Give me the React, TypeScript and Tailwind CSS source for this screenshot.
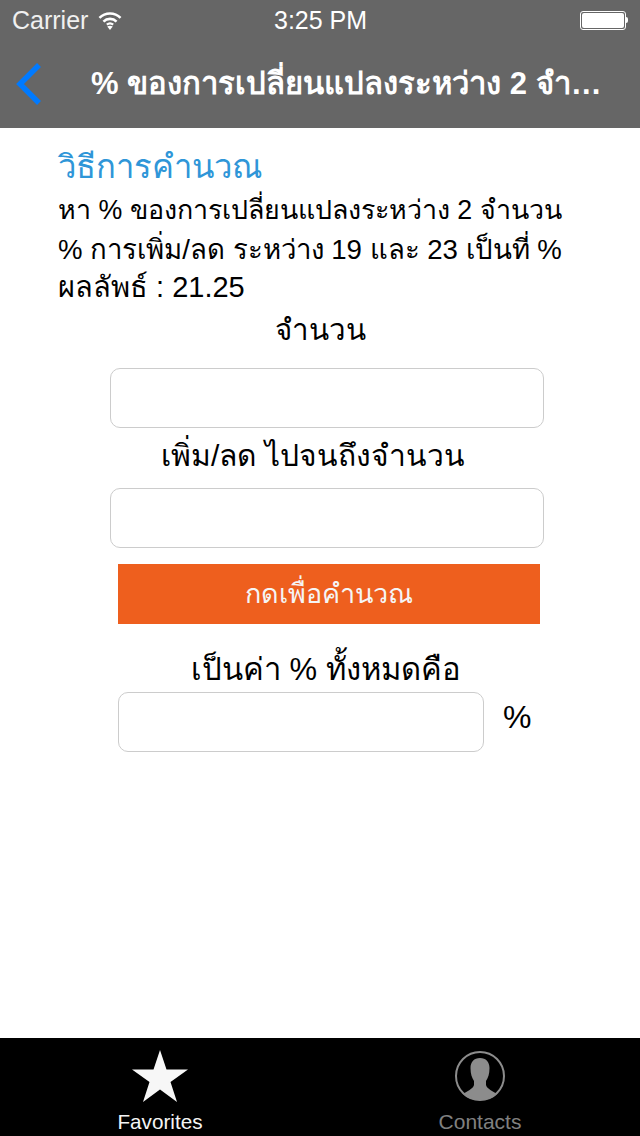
const sans = 'font-["Helvetica_Neue","Liberation_Sans","Noto_Sans",sans-serif]';

function Field({ className }: { className: string }) {
  return <div className={`h-[60px] rounded-[10px] border border-[#cccccc] bg-white ${className}`} />;
}

export default function App() {
  return (
    <div className={`flex h-[1136px] w-[640px] flex-col bg-white ${sans}`}>
      {/* status + nav bar */}
      <header className="h-[128px] shrink-0 bg-[#666666] text-white">
        <div className="relative flex h-[40px] items-center pl-3 pr-[12px]">
          <span className="text-[25px] leading-none text-[#f0f0f0]">Carrier</span>
          <svg className="ml-[10px]" width="24" height="19" viewBox="0 0 22 18" fill="none" stroke="white">
            <path d="M1 6.500C6.500 1 15.500 1 21 6.500" strokeWidth="2.4" />
            <path d="M4.800 10C8.200 6.600 13.800 6.600 17.200 10" strokeWidth="2.4" />
            <path d="M8 13C9.800 11.500 12.200 11.500 14 13" strokeWidth="2.200" />
            <path d="M11 18L8.400 14.800C10 13.800 12 13.800 13.600 14.800Z" fill="white" stroke="none" />
          </svg>
          <span className="absolute left-[274px] text-[25px] font-medium leading-none">3:25 PM</span>
          <div className="ml-auto flex items-center">
            <div className="h-[19px] w-[46px] rounded-[3px] border border-white p-[1px]">
              <div className="h-full w-full rounded-[2px] bg-white" />
            </div>
            <div className="h-[6px] w-[2px] rounded-r-sm bg-white" />
          </div>
        </div>
        <div className="flex h-[88px] items-center">
          <svg className="ml-4 shrink-0" width="26" height="42" viewBox="0 0 26 42" fill="none">
            <path d="M23 2L4 21L23 40" stroke="#007aff" strokeWidth="5.500" />
          </svg>
          <h1 className="ml-[49px] w-[514px] truncate text-[31px] font-bold leading-[44px]">
            % ของการเปลี่ยนแปลงระหว่าง 2 จำนวน
          </h1>
        </div>
      </header>

      <main className="flex flex-1 flex-col">
        <div className="pl-[58px]">
          <h2 className="mt-[17px] h-[44px] text-[32.8px] leading-[44px] text-[#2f96d8]">วิธีการคำนวณ</h2>
          <p className="mt-[2px] h-[39px] text-[26.8px] leading-[39px] text-black">หา % ของการเปลี่ยนแปลงระหว่าง 2 จำนวน</p>
          <p className="h-[39px] text-[27.6px] leading-[39px] text-black">% การเพิ่ม/ลด ระหว่าง 19 และ 23 เป็นที่ %</p>
          <p className="h-[36px] text-[29px] leading-[36px] text-black">ผลลัพธ์ : 21.25</p>
        </div>
        <p className="ml-[275px] mt-[5px] h-[40px] text-[29.5px] leading-[40px] text-black">จำนวน</p>
        <Field className="ml-[110px] mt-[18px] w-[434px]" />
        <p className="ml-[161px] mt-[6px] h-[44px] text-[30px] leading-[44px] text-black">เพิ่ม/ลด ไปจนถึงจำนวน</p>
        <Field className="ml-[110px] mt-[10px] w-[434px]" />
        <button className="ml-[118px] mt-[16px] flex h-[60px] w-[422px] items-center justify-center bg-[#ee5f1e] text-[27px] text-[#f5f5f5]">
          กดเพื่อคำนวณ
        </button>
        <p className="ml-[191px] mt-[24px] h-[44px] text-[31px] leading-[44px] text-black">เป็นค่า % ทั้งหมดคือ</p>
        <div className="ml-[118px] flex items-center">
          <Field className="w-[366px]" />
          <span className="mb-[10px] ml-[19px] text-[32px] leading-none text-black">%</span>
        </div>
      </main>

      {/* tab bar */}
      <nav className="grid h-[98px] shrink-0 grid-cols-2 bg-black">
        <div className="flex flex-col items-center pt-[12px]">
          <svg width="56" height="52" viewBox="0 0 56 52">
            <path d="M28 0L34.500 19.500H56L38.500 32L45 52L28 39.500L11 52L17.500 32L0 19.500H21.500Z" fill="#f7f7f7" />
          </svg>
          <span className="mt-[8px] text-[20.7px] leading-[24px] text-[#f5f5f5]">Favorites</span>
        </div>
        <div className="flex flex-col items-center pt-[12px]">
          <svg width="52" height="52" viewBox="0 0 52 52">
            <circle cx="26" cy="26" r="24" fill="none" stroke="#8c8c8c" strokeWidth="2" />
            <path
              d="M26 8C20 8 16.500 12 16.500 18C16.500 24 18 28 20 31L20 35C19 39 13 41 9 44C13 48 19 50 26 50C33 50 39 48 43 44C39 41 33 39 32 35L32 31C34 28 35.500 24 35.500 18C35.500 12 32 8 26 8Z"
              fill="#8c8c8c"
            />
          </svg>
          <span className="mt-[8px] text-[21px] leading-[24px] text-[#808080]">Contacts</span>
        </div>
      </nav>
    </div>
  );
}
